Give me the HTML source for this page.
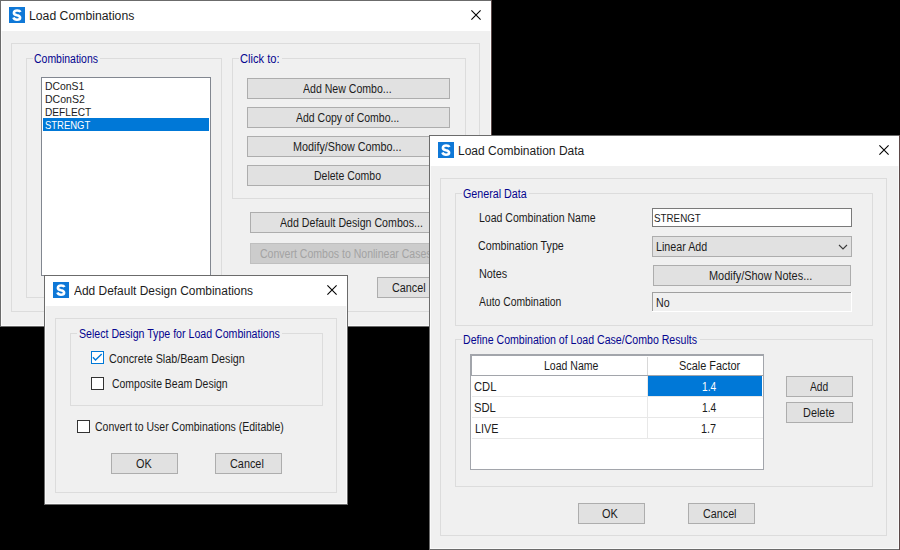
<!DOCTYPE html>
<html><head><meta charset="utf-8"><style>
html,body{margin:0;padding:0;width:900px;height:550px;overflow:hidden;background:#000}
body>div,body>svg{position:absolute;box-sizing:border-box}
.t{font-family:"Liberation Sans",sans-serif;line-height:20px;white-space:pre;transform-origin:0 0}
</style></head><body>
<div style='left:0px;top:0px;width:900px;height:550px;background:#000;'></div><div style='left:0px;top:0px;width:492px;height:327px;background:#f0f0f0;'></div><div style='left:0px;top:0px;width:492px;height:1px;background:#6b6b6b;'></div><div style='left:0px;top:326px;width:492px;height:1px;background:#6b6b6b;'></div><div style='left:0px;top:0px;width:1px;height:327px;background:#6b6b6b;'></div><div style='left:491px;top:0px;width:1px;height:327px;background:#5b4848;'></div><div style='left:1px;top:1px;width:490px;height:1px;background:#fafafa;'></div><div style='left:1px;top:325px;width:490px;height:1px;background:#fafafa;'></div><div style='left:1px;top:1px;width:1px;height:325px;background:#fafafa;'></div><div style='left:490px;top:1px;width:1px;height:325px;background:#fafafa;'></div><div style='left:1px;top:1px;width:490px;height:30px;background:#fff;'></div><div style='left:9px;top:7px;width:16px;height:16px;background:#0f78d7;'></div><svg style='left:9px;top:7px' width='16' height='16' viewBox='0 0 16 16'><path d='M11.4 5.1 C10.9 3.9 9.7 3.5 8.1 3.5 C6.2 3.5 4.9 4.3 4.9 5.9 C4.9 7.5 6.4 7.9 8.0 8.3 C9.8 8.7 11.1 9.2 11.1 10.8 C11.1 12.3 9.8 12.7 8.0 12.7 C6.3 12.7 5.0 12.1 4.4 10.6' stroke='#fff' stroke-width='2.6' fill='none'/></svg><div class='t' style='left:29.28px;top:6px;font-size:12px;color:#1c1c1c;transform:scaleX(1.0186)'>Load Combinations</div><svg style='left:471px;top:10px' width='10' height='10' viewBox='0 0 10 10'><path d='M0.4 0.4 L9.6 9.6 M9.6 0.4 L0.4 9.6' stroke='#000' stroke-width='1.1' fill='none'/></svg><div style='left:11px;top:43px;width:469px;height:269px;border:1px solid #dcdcdc;'></div><div style='left:26px;top:58px;width:196px;height:240px;border:1px solid #dcdcdc;'></div><div style='left:32.5px;top:57px;width:67.8px;height:3px;background:#f0f0f0;'></div><div class='t' style='left:33.63px;top:49px;font-size:12px;color:#05058f;transform:scaleX(0.8722)'>Combinations</div><div style='left:232px;top:58px;width:234px;height:141px;border:1px solid #dcdcdc;'></div><div style='left:238.5px;top:57px;width:43.0px;height:3px;background:#f0f0f0;'></div><div class='t' style='left:239.57px;top:49px;font-size:12px;color:#05058f;transform:scaleX(0.9268)'>Click to:</div><div style='left:41px;top:77px;width:170px;height:199px;background:#fff;border:1px solid #828790;'></div><div class='t' style='left:45.10px;top:76px;font-size:11.5px;color:#1c1c1c;transform:scaleX(0.9048)'>DConS1</div><div class='t' style='left:45.08px;top:89px;font-size:11.5px;color:#1c1c1c;transform:scaleX(0.9167)'>DConS2</div><div class='t' style='left:45.12px;top:102px;font-size:11.5px;color:#1c1c1c;transform:scaleX(0.8824)'>DEFLECT</div><div style='left:43px;top:118px;width:166px;height:13px;background:#0078d7;'></div><div class='t' style='left:45.18px;top:115px;font-size:11.5px;color:#fff;transform:scaleX(0.8241)'>STRENGT</div><div style='left:247px;top:78px;width:203px;height:21px;background:#e1e1e1;border:1px solid #adadad;'></div><div class='t' style='left:303.30px;top:79px;font-size:12px;color:#1c1c1c;transform:scaleX(0.8800)'>Add New Combo...</div><div style='left:247px;top:107px;width:203px;height:21px;background:#e1e1e1;border:1px solid #adadad;'></div><div class='t' style='left:296.00px;top:108px;font-size:12px;color:#1c1c1c;transform:scaleX(0.8744)'>Add Copy of Combo...</div><div style='left:247px;top:136px;width:203px;height:21px;background:#e1e1e1;border:1px solid #adadad;'></div><div class='t' style='left:293.40px;top:137px;font-size:12px;color:#1c1c1c;transform:scaleX(0.8992)'>Modify/Show Combo...</div><div style='left:247px;top:165px;width:203px;height:21px;background:#e1e1e1;border:1px solid #adadad;'></div><div class='t' style='left:313.63px;top:166px;font-size:12px;color:#1c1c1c;transform:scaleX(0.8733)'>Delete Combo</div><div style='left:250px;top:212px;width:203px;height:21px;background:#e1e1e1;border:1px solid #adadad;'></div><div class='t' style='left:280.00px;top:213px;font-size:12px;color:#1c1c1c;transform:scaleX(0.8850)'>Add Default Design Combos...</div><div style='left:250px;top:243px;width:203px;height:21px;background:#cccccc;border:1px solid #bfbfbf;'></div><div class='t' style='left:259.52px;top:244px;font-size:12px;color:#a3a3a3;transform:scaleX(0.8778)'>Convert Combos to Nonlinear Cases</div><div style='left:377px;top:277px;width:67px;height:21px;background:#e1e1e1;border:1px solid #adadad;'></div><div class='t' style='left:391.70px;top:278px;font-size:12px;color:#1c1c1c;transform:scaleX(0.9000)'>Cancel</div><div style='left:44px;top:275px;width:304px;height:230px;background:#f0f0f0;'></div><div style='left:44px;top:275px;width:304px;height:1px;background:#6b6b6b;'></div><div style='left:44px;top:504px;width:304px;height:1px;background:#6b6b6b;'></div><div style='left:44px;top:275px;width:1px;height:230px;background:#6b6b6b;'></div><div style='left:347px;top:275px;width:1px;height:230px;background:#6b6b6b;'></div><div style='left:45px;top:276px;width:302px;height:1px;background:#fafafa;'></div><div style='left:45px;top:503px;width:302px;height:1px;background:#fafafa;'></div><div style='left:45px;top:276px;width:1px;height:228px;background:#fafafa;'></div><div style='left:346px;top:276px;width:1px;height:228px;background:#fafafa;'></div><div style='left:45px;top:276px;width:302px;height:30px;background:#fff;'></div><div style='left:53px;top:282px;width:16px;height:16px;background:#0f78d7;'></div><svg style='left:53px;top:282px' width='16' height='16' viewBox='0 0 16 16'><path d='M11.4 5.1 C10.9 3.9 9.7 3.5 8.1 3.5 C6.2 3.5 4.9 4.3 4.9 5.9 C4.9 7.5 6.4 7.9 8.0 8.3 C9.8 8.7 11.1 9.2 11.1 10.8 C11.1 12.3 9.8 12.7 8.0 12.7 C6.3 12.7 5.0 12.1 4.4 10.6' stroke='#fff' stroke-width='2.6' fill='none'/></svg><div class='t' style='left:74.40px;top:281px;font-size:12px;color:#1c1c1c;transform:scaleX(0.9944)'>Add Default Design Combinations</div><svg style='left:327px;top:285px' width='10' height='10' viewBox='0 0 10 10'><path d='M0.4 0.4 L9.6 9.6 M9.6 0.4 L0.4 9.6' stroke='#000' stroke-width='1.1' fill='none'/></svg><div style='left:55px;top:318px;width:282px;height:175px;border:1px solid #dcdcdc;'></div><div style='left:70px;top:333px;width:253px;height:73px;border:1px solid #dcdcdc;'></div><div style='left:77.4px;top:332px;width:204.79999999999998px;height:3px;background:#f0f0f0;'></div><div class='t' style='left:78.52px;top:324px;font-size:12px;color:#05058f;transform:scaleX(0.8841)'>Select Design Type for Load Combinations</div><div style='left:91px;top:351px;width:13px;height:13px;background:#fff;border:1px solid #0078d7;'></div><svg style='left:91px;top:351px' width='13' height='13' viewBox='0 0 13 13'><path d='M1.9 6.3 L4.5 9 L10.7 2.9' stroke='#0078d7' stroke-width='1.4' fill='none'/></svg><div class='t' style='left:108.80px;top:349px;font-size:12px;color:#1c1c1c;transform:scaleX(0.8967)'>Concrete Slab/Beam Design</div><div style='left:91px;top:377px;width:13px;height:13px;background:#fff;border:1px solid #333;'></div><div class='t' style='left:112.03px;top:374px;font-size:12px;color:#1c1c1c;transform:scaleX(0.8710)'>Composite Beam Design</div><div style='left:77px;top:420px;width:13px;height:13px;background:#fff;border:1px solid #333;'></div><div class='t' style='left:94.92px;top:417px;font-size:12px;color:#1c1c1c;transform:scaleX(0.8762)'>Convert to User Combinations (Editable)</div><div style='left:111px;top:453px;width:67px;height:21px;background:#e1e1e1;border:1px solid #adadad;'></div><div class='t' style='left:135.60px;top:454px;font-size:12px;color:#1c1c1c;transform:scaleX(0.9059)'>OK</div><div style='left:215px;top:453px;width:67px;height:21px;background:#e1e1e1;border:1px solid #adadad;'></div><div class='t' style='left:229.79px;top:454px;font-size:12px;color:#1c1c1c;transform:scaleX(0.9056)'>Cancel</div><div style='left:429px;top:135px;width:471px;height:415px;background:#f0f0f0;'></div><div style='left:429px;top:135px;width:471px;height:1px;background:#6b6b6b;'></div><div style='left:429px;top:549px;width:471px;height:1px;background:#6b6b6b;'></div><div style='left:429px;top:135px;width:1px;height:415px;background:#6b6b6b;'></div><div style='left:899px;top:135px;width:1px;height:415px;background:#5b4848;'></div><div style='left:430px;top:136px;width:469px;height:1px;background:#fafafa;'></div><div style='left:430px;top:548px;width:469px;height:1px;background:#fafafa;'></div><div style='left:430px;top:136px;width:1px;height:413px;background:#fafafa;'></div><div style='left:898px;top:136px;width:1px;height:413px;background:#fafafa;'></div><div style='left:430px;top:136px;width:469px;height:30px;background:#fff;'></div><div style='left:438px;top:142px;width:16px;height:16px;background:#0f78d7;'></div><svg style='left:438px;top:142px' width='16' height='16' viewBox='0 0 16 16'><path d='M11.4 5.1 C10.9 3.9 9.7 3.5 8.1 3.5 C6.2 3.5 4.9 4.3 4.9 5.9 C4.9 7.5 6.4 7.9 8.0 8.3 C9.8 8.7 11.1 9.2 11.1 10.8 C11.1 12.3 9.8 12.7 8.0 12.7 C6.3 12.7 5.0 12.1 4.4 10.6' stroke='#fff' stroke-width='2.6' fill='none'/></svg><div class='t' style='left:458.40px;top:141px;font-size:12px;color:#1c1c1c;transform:scaleX(1.0016)'>Load Combination Data</div><svg style='left:879px;top:145px' width='10' height='10' viewBox='0 0 10 10'><path d='M0.4 0.4 L9.6 9.6 M9.6 0.4 L0.4 9.6' stroke='#000' stroke-width='1.1' fill='none'/></svg><div style='left:440px;top:178px;width:447px;height:358px;border:1px solid #dcdcdc;'></div><div style='left:455px;top:193px;width:418px;height:133px;border:1px solid #dcdcdc;'></div><div style='left:461.8px;top:192px;width:67.40000000000003px;height:3px;background:#f0f0f0;'></div><div class='t' style='left:462.91px;top:184px;font-size:12px;color:#05058f;transform:scaleX(0.8914)'>General Data</div><div class='t' style='left:478.52px;top:208px;font-size:12px;color:#1c1c1c;transform:scaleX(0.8779)'>Load Combination Name</div><div class='t' style='left:477.71px;top:236px;font-size:12px;color:#1c1c1c;transform:scaleX(0.8884)'>Combination Type</div><div class='t' style='left:478.50px;top:264px;font-size:12px;color:#1c1c1c;transform:scaleX(0.9000)'>Notes</div><div class='t' style='left:479.00px;top:292px;font-size:12px;color:#1c1c1c;transform:scaleX(0.8632)'>Auto Combination</div><div style='left:652px;top:208px;width:200px;height:19px;background:#fff;border:1px solid #7a7a7a;'></div><div class='t' style='left:654.15px;top:208px;font-size:11.5px;color:#1c1c1c;transform:scaleX(0.8519)'>STRENGT</div><div style='left:652px;top:236px;width:200px;height:21px;background:#e1e1e1;border:1px solid #adadad;'></div><div class='t' style='left:655.51px;top:237px;font-size:12px;color:#1c1c1c;transform:scaleX(0.8929)'>Linear Add</div><svg style='left:838px;top:244px' width='10' height='7' viewBox='0 0 10 7'><path d='M1 1 L5 5 L9 1' stroke='#3a3a3a' stroke-width='1.1' fill='none'/></svg><div style='left:653px;top:265px;width:198px;height:21px;background:#e1e1e1;border:1px solid #adadad;'></div><div class='t' style='left:708.59px;top:266px;font-size:12px;color:#1c1c1c;transform:scaleX(0.9108)'>Modify/Show Notes...</div><div style='left:652px;top:292px;width:200px;height:20px;background:#f0f0f0;'></div><div style='left:652px;top:292px;width:199px;height:1px;background:#a0a0a0;'></div><div style='left:652px;top:292px;width:1px;height:19px;background:#a0a0a0;'></div><div style='left:652px;top:311px;width:200px;height:1px;background:#fff;'></div><div style='left:851px;top:292px;width:1px;height:20px;background:#fff;'></div><div class='t' style='left:655.71px;top:293px;font-size:12px;color:#1c1c1c;transform:scaleX(0.8857)'>No</div><div style='left:455px;top:339px;width:418px;height:148px;border:1px solid #dcdcdc;'></div><div style='left:462.3px;top:338px;width:237.7px;height:3px;background:#f0f0f0;'></div><div class='t' style='left:463.42px;top:330px;font-size:12px;color:#05058f;transform:scaleX(0.8814)'>Define Combination of Load Case/Combo Results</div><div style='left:470px;top:354px;width:294px;height:116px;background:#fff;border:1px solid #a2a5ab;'></div><div style='left:471px;top:355px;width:292px;height:1px;background:#a2a5ab;'></div><div style='left:471px;top:355px;width:1px;height:20px;background:#a2a5ab;'></div><div style='left:471px;top:375px;width:292px;height:1px;background:#a2a5ab;'></div><div style='left:647px;top:357px;width:1px;height:18px;background:#d8d8d8;'></div><div style='left:648px;top:376px;width:114px;height:20px;background:#0078d7;'></div><div style='left:472px;top:396px;width:291px;height:1px;background:#e8e8e8;'></div><div style='left:472px;top:417px;width:291px;height:1px;background:#e8e8e8;'></div><div style='left:472px;top:438px;width:291px;height:1px;background:#e8e8e8;'></div><div style='left:647px;top:397px;width:1px;height:20px;background:#e8e8e8;'></div><div style='left:647px;top:418px;width:1px;height:20px;background:#e8e8e8;'></div><div style='left:647px;top:376px;width:1px;height:20px;background:#e8e8e8;'></div><div class='t' style='left:543.62px;top:356px;font-size:12px;color:#1c1c1c;transform:scaleX(0.8770)'>Load Name</div><div class='t' style='left:679.09px;top:356px;font-size:12px;color:#1c1c1c;transform:scaleX(0.9091)'>Scale Factor</div><div class='t' style='left:473.57px;top:377px;font-size:12px;color:#1c1c1c;transform:scaleX(0.9348)'>CDL</div><div class='t' style='left:474.46px;top:398px;font-size:12px;color:#1c1c1c;transform:scaleX(0.9364)'>SDL</div><div class='t' style='left:474.50px;top:419px;font-size:12px;color:#1c1c1c;transform:scaleX(0.8960)'>LIVE</div><div class='t' style='left:701.55px;top:377px;font-size:12px;color:#fff;transform:scaleX(0.8500)'>1.4</div><div class='t' style='left:701.55px;top:398px;font-size:12px;color:#1c1c1c;transform:scaleX(0.8500)'>1.4</div><div class='t' style='left:701.49px;top:419px;font-size:12px;color:#1c1c1c;transform:scaleX(0.9067)'>1.7</div><div style='left:786px;top:376px;width:67px;height:21px;background:#e1e1e1;border:1px solid #adadad;'></div><div class='t' style='left:809.50px;top:377px;font-size:12px;color:#1c1c1c;transform:scaleX(0.8571)'>Add</div><div style='left:786px;top:402px;width:67px;height:21px;background:#e1e1e1;border:1px solid #adadad;'></div><div class='t' style='left:802.59px;top:403px;font-size:12px;color:#1c1c1c;transform:scaleX(0.9091)'>Delete</div><div style='left:578px;top:503px;width:67px;height:21px;background:#e1e1e1;border:1px solid #adadad;'></div><div class='t' style='left:602.40px;top:504px;font-size:12px;color:#1c1c1c;transform:scaleX(0.9118)'>OK</div><div style='left:688px;top:503px;width:67px;height:21px;background:#e1e1e1;border:1px solid #adadad;'></div><div class='t' style='left:702.90px;top:504px;font-size:12px;color:#1c1c1c;transform:scaleX(0.8972)'>Cancel</div>
</body></html>
